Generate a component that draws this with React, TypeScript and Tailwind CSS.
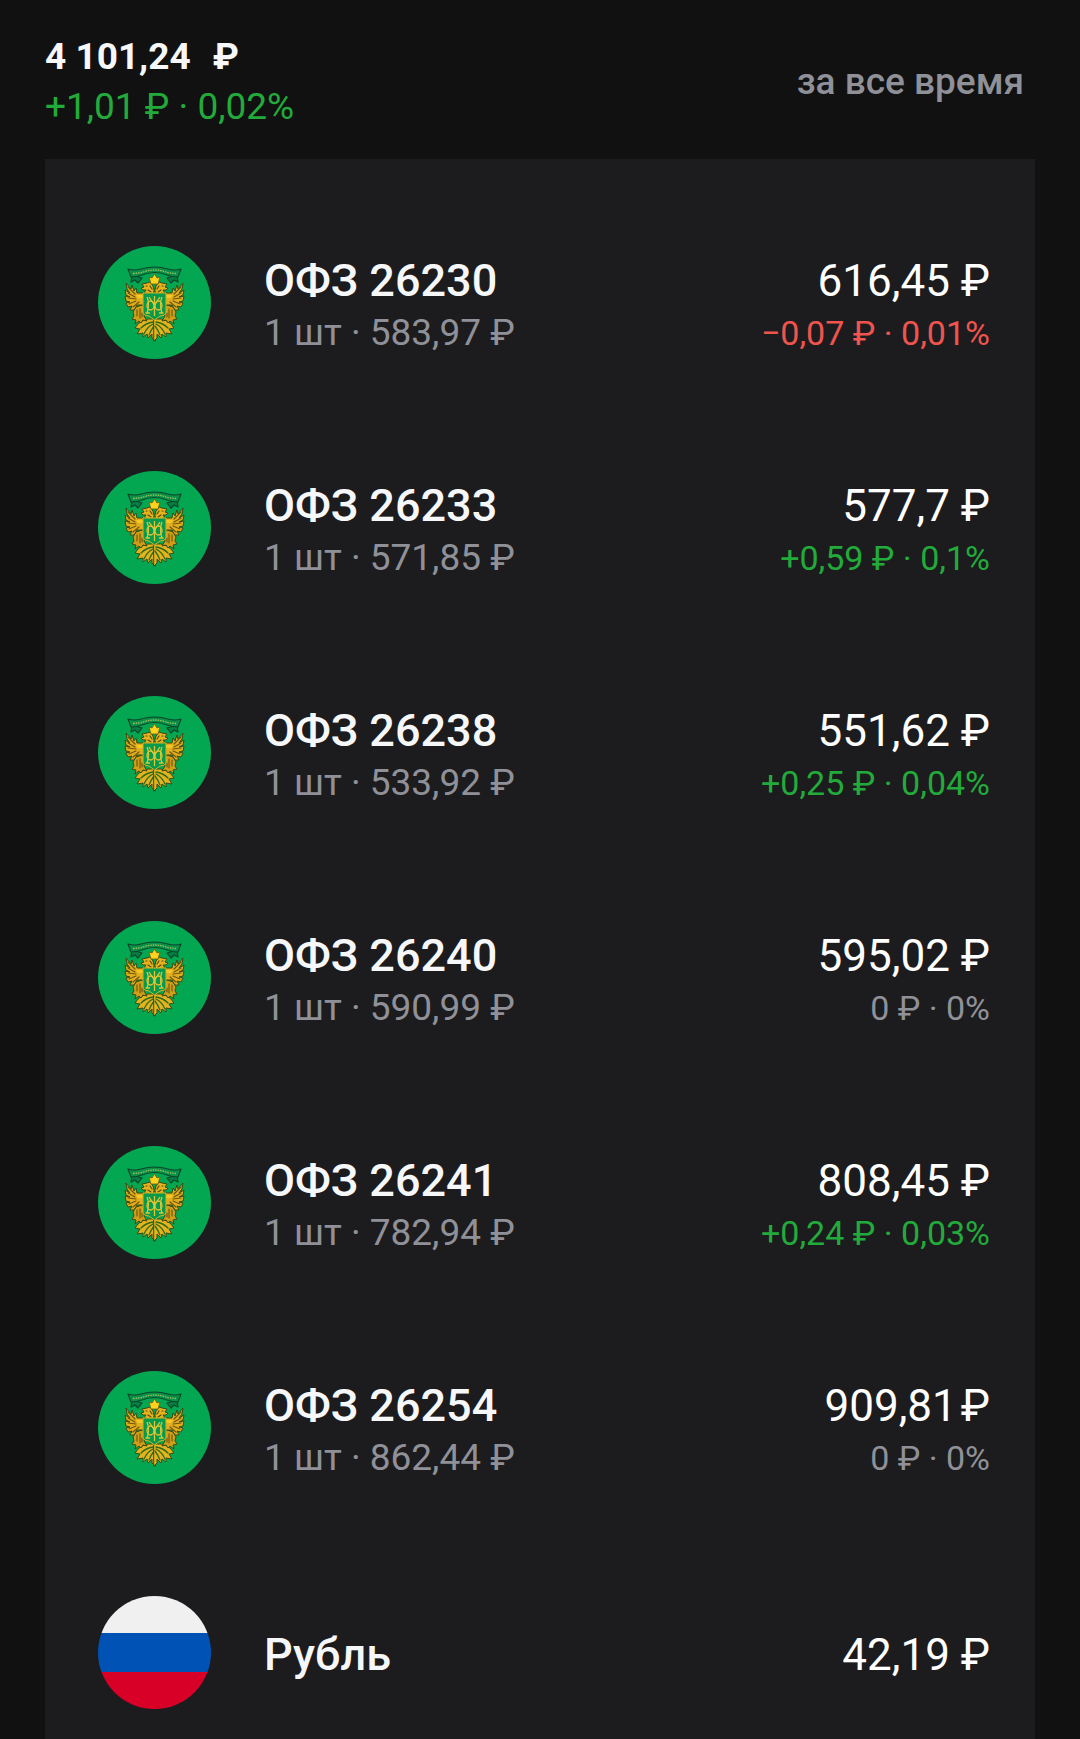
type Tone = 'up' | 'down' | 'flat';

type Holding = {
  name: string;
  quantity?: string;
  amount: string;
  change?: string;
  tone: Tone;
  tight?: boolean;
  currency?: boolean;
};

const holdings: Holding[] = [
  { name: 'ОФЗ 26230', quantity: '1 шт · 583,97 ₽', amount: '616,45', change: '−0,07 ₽ · 0,01%', tone: 'down' },
  { name: 'ОФЗ 26233', quantity: '1 шт · 571,85 ₽', amount: '577,7', change: '+0,59 ₽ · 0,1%', tone: 'up' },
  { name: 'ОФЗ 26238', quantity: '1 шт · 533,92 ₽', amount: '551,62', change: '+0,25 ₽ · 0,04%', tone: 'up' },
  { name: 'ОФЗ 26240', quantity: '1 шт · 590,99 ₽', amount: '595,02', change: '0 ₽ · 0%', tone: 'flat' },
  { name: 'ОФЗ 26241', quantity: '1 шт · 782,94 ₽', amount: '808,45', change: '+0,24 ₽ · 0,03%', tone: 'up' },
  { name: 'ОФЗ 26254', quantity: '1 шт · 862,44 ₽', amount: '909,81', change: '0 ₽ · 0%', tone: 'flat', tight: true },
  { name: 'Рубль', amount: '42,19', tone: 'flat', currency: true },
];

const toneClass: Record<Tone, string> = {
  up: 'text-[#22ab3b]',
  down: 'text-[#f0544f]',
  flat: 'text-[#909198]',
};

/* One half of the double-headed eagle; the other half is its mirror image. */
function EagleHalf() {
  return (
    <g strokeLinejoin="round" strokeLinecap="round">
      {/* tail feathers */}
      <path
        d="M57 73 L50 73 L44 75 L40 78 L37 82 L42 83 L39 88 L45 87 L45 91 L49 88 L50 92 L54 88 L54 92 L57 95 Z"
        fill="#e3b31e"
        stroke="#3f4a12"
        strokeWidth="1"
      />
      <path d="M55 76 Q48 77 43 82 M55 78 Q49 81 46 88 M56 80 Q53 84 51 89" fill="none" stroke="#2f6a1c" strokeWidth="1.3" />
      {/* leg and claw */}
      <path
        d="M44 59 L38 61 L35 66 L36 70 L34 73 L38 74 L37 78 L41 75 L43 77 L45 74 L49 75 L46 70 L47 64 Z"
        fill="#cf9f1a"
        stroke="#3f4a12"
        strokeWidth="1"
      />
      <path d="M39 64 L39 70 M42 63 L42 72 M44 67 L44 71" fill="none" stroke="#5b4a10" strokeWidth="1" />
      {/* wing */}
      <path
        d="M45 47 L39 47 L38 42 L36 45 L34 39 L33 43 L28 37 L29 43 L32 47 L27 44 L28 49 L32 51 L27 50 L28 55 L32 56 L28 57 L30 61 L34 60 L32 64 L36 64 L39 59 L45 59 Z"
        fill="#e3ae1d"
        stroke="#3f4a12"
        strokeWidth="1"
      />
      <path d="M30 41 L37 48 M30 47 L37 51 M30 52 L38 53 M31 58 L38 55 M35 61 L41 56" fill="none" stroke="#6b5610" strokeWidth="1.2" />
      <path d="M38 49 H45 V52 H40 Z" fill="#f6c824" />
      {/* head and neck */}
      <path
        d="M55 48 L46 47 L48 44 L45 44 L43 42 L46 41 L44 38 L49 37 L52 36 L55 40 L56 44 Z"
        fill="#e6b21e"
        stroke="#3f4a12"
        strokeWidth="1"
      />
      <path d="M48 40 L49 40 M50 44 L53 46 M52 40 L54 43" fill="none" stroke="#5b4a10" strokeWidth="1.2" />
    </g>
  );
}

function MinistryEmblem() {
  return (
    <svg viewBox="0 0 113 113" className="size-[113px] shrink-0" aria-hidden="true">
      <circle cx="56.5" cy="56.5" r="56.5" fill="#03a651" />
      <EagleHalf />
      <g transform="translate(113 0) scale(-1 1)">
        <EagleHalf />
      </g>
      {/* ribbon */}
      <g stroke="#07482a" strokeWidth="1.2" strokeLinejoin="round">
        <path d="M34 29 L33 36 L37 34 L40 37 L44 32 Z" fill="#087c42" />
        <path d="M79 29 L80 36 L76 34 L73 37 L69 32 Z" fill="#087c42" />
        <path d="M30 23 Q36 25 43 23 Q56.5 19 70 23 Q77 25 83 23 L80 31 Q74 31 69 29 Q56.5 24 44 29 Q39 31 33 31 Z" fill="#0c9048" />
      </g>
      <path d="M35 27.5 Q42 27 45 26 Q56.5 22 68 26 Q71 27 78 27.5" fill="none" stroke="#a1bf5b" strokeWidth="1.3" strokeDasharray="1.5 1" />
      {/* crown */}
      <path d="M53 38 L51 31 L54 32 L56.5 28 L59 32 L62 31 L60 38 Z" fill="#ffd21f" stroke="#6c6010" strokeWidth="0.8" />
      {/* shield with monogram */}
      <path d="M45 47 H68 V67 Q67 70 62 70 L56.5 74 L51 70 Q46 70 45 67 Z" fill="#079a4d" stroke="#d6b422" strokeWidth="1" />
      <g fill="none" stroke="#dcc637" strokeWidth="1.3">
        <path d="M56.5 50 V70 M49 51 Q52 58 49 67 M64 51 Q61 58 64 67 M51 51 L56.5 59 L62 51 M47.5 67 H52 M61 67 H65.5" />
        <ellipse cx="52.5" cy="59.5" rx="3.5" ry="4.5" />
        <ellipse cx="60.5" cy="59.5" rx="3.5" ry="4.5" />
      </g>
    </svg>
  );
}

function RussianFlag() {
  return (
    <div className="flex size-[113px] shrink-0 flex-col overflow-hidden rounded-full" aria-hidden="true">
      <div className="h-[37px] bg-[#f0f0f0]" />
      <div className="h-[39px] bg-[#0052b4]" />
      <div className="grow bg-[#d80027]" />
    </div>
  );
}

function HoldingRow({ item }: { item: Holding }) {
  return (
    <li className="flex items-center py-14 pr-[45px] pl-[53px] last:pb-0">
      {item.currency ? <RussianFlag /> : <MinistryEmblem />}
      <div className={item.quantity ? 'ml-[53px] flex grow justify-between pt-[9px]' : 'ml-[53px] flex grow justify-between pt-1'}>
        <div>
          <h2 className="text-[45px] leading-[52px] font-medium text-[#f6f7f9]">{item.name}</h2>
          {item.quantity && <p className="text-[37px] leading-[52px] text-[#909198]">{item.quantity}</p>}
        </div>
        <div className="text-right">
          <p className="text-[44px] leading-[52px]">
            {item.amount}
            {item.tight ? <span className="ml-1">₽</span> : ' ₽'}
          </p>
          {item.change && (
            <p className={`text-[34px] leading-[52px] ${toneClass[item.tone]}`}>{item.change}</p>
          )}
        </div>
      </div>
    </li>
  );
}

export default function App() {
  return (
    <main className="flex min-h-screen flex-col bg-[#111111] px-[45px] font-['Roboto',sans-serif] text-white">
      <header className="flex items-center justify-between pt-8 pr-[11px] pb-[27px]">
        <div className="text-[37px] leading-[50px]">
          <p className="flex gap-[22px] font-bold text-[#f6f7f9]">
            <span>4 101,24</span>
            <span>₽</span>
          </p>
          <p className="text-[#22ab3b]">+1,01 ₽ · 0,02%</p>
        </div>
        <p className="text-[37px] leading-[50px] font-medium text-[#909198]">за все время</p>
      </header>
      <ul className="grow bg-[#1c1c1e] pt-[31px]">
        {holdings.map((item) => (
          <HoldingRow key={item.name} item={item} />
        ))}
      </ul>
    </main>
  );
}
